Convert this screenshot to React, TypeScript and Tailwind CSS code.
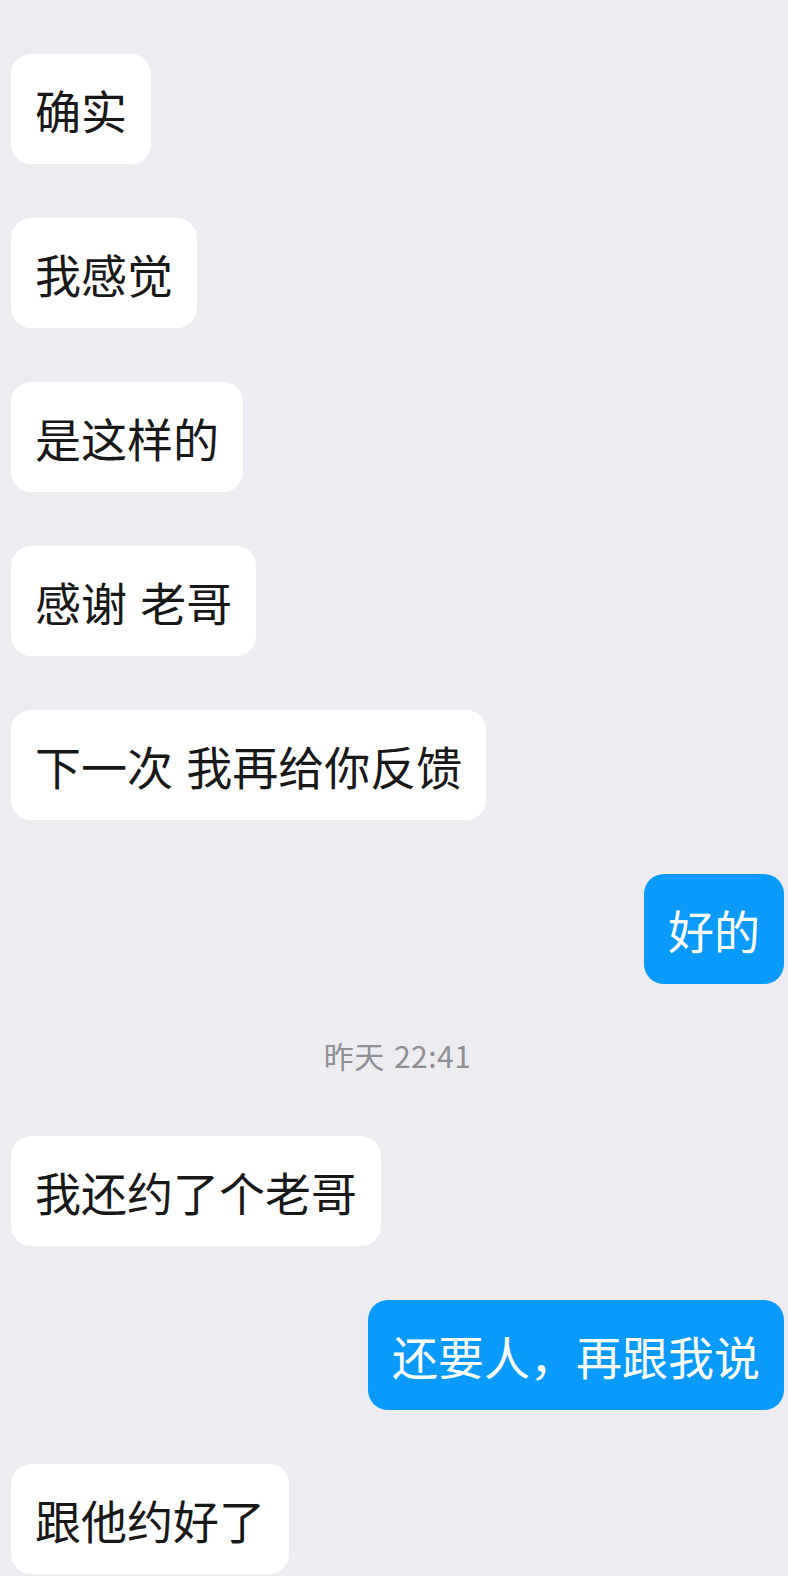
const font = { fontFamily: '"Noto Sans CJK SC", "Noto Sans", sans-serif' };

type Msg =
  | { kind: "in"; text: string }
  | { kind: "out"; text: string }
  | { kind: "time"; text: string };

const messages: Msg[] = [
  { kind: "in", text: "确实" },
  { kind: "in", text: "我感觉" },
  { kind: "in", text: "是这样的" },
  { kind: "in", text: "感谢 老哥" },
  { kind: "in", text: "下一次 我再给你反馈" },
  { kind: "out", text: "好的" },
  { kind: "time", text: "昨天 22:41" },
  { kind: "in", text: "我还约了个老哥" },
  { kind: "out", text: "还要人，再跟我说" },
  { kind: "in", text: "跟他约好了" },
];

function Bubble({ msg }: { msg: Msg }) {
  if (msg.kind === "time") {
    return (
      <div className="h-[44px] flex justify-center">
        <span className="text-[30px] leading-[34px] text-[#8f8f94] tracking-[0.5px] [word-spacing:2px]">
          {msg.text}
        </span>
      </div>
    );
  }
  const out = msg.kind === "out";
  return (
    <div className={out ? "flex justify-end" : "flex justify-start"}>
      <div
        className={
          out
            ? "h-[110px] flex items-center px-6 rounded-[20px] bg-[#0a9afc] text-white text-[46px] leading-none whitespace-pre [word-spacing:3px]"
            : "h-[110px] flex items-center px-6 rounded-[20px] bg-white text-[#181818] text-[46px] leading-none whitespace-pre [word-spacing:3px]"
        }
      >
        {msg.text}
      </div>
    </div>
  );
}

export default function App() {
  return (
    <div style={font} className="w-[788px] h-[1576px] overflow-hidden bg-[#ededf1]">
      <div className="flex flex-col gap-[54px] pt-[54px] pl-[11px] pr-[4px]">
        {messages.map((m, i) => (
          <Bubble key={i} msg={m} />
        ))}
      </div>
    </div>
  );
}
